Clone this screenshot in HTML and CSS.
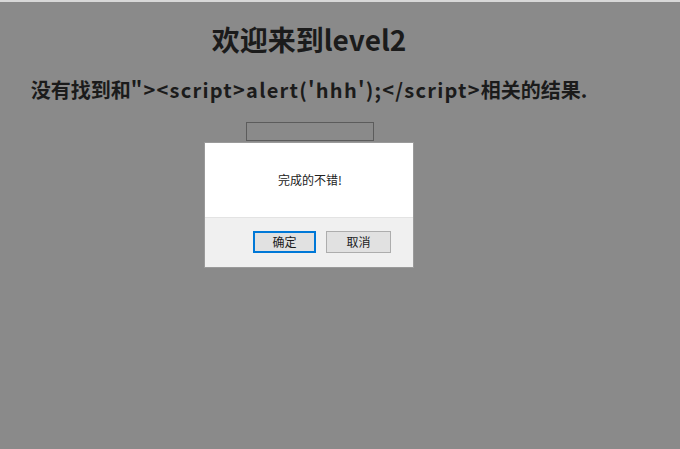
FILE: index.html
```html
<!DOCTYPE html>
<html lang="zh-CN">
<head>
<meta charset="utf-8">
<title>level2</title>
<link rel="stylesheet" href="styles.css">
</head>
<body>
<div class="topline"></div>
<main class="page">
  <h1 class="title">欢迎来到level2</h1>
  <h2 class="result">没有找到和<span class="code">"&gt;&lt;script&gt;alert('hhh');&lt;/script&gt;</span>相关的结果.</h2>
  <form class="search">
    <input class="search-input" type="text" name="keyword" value="">
  </form>
</main>
<div class="dialog" role="dialog">
  <div class="dialog-body">完成的不错!</div>
  <div class="dialog-footer">
    <button class="btn btn-primary" type="button">确定</button>
    <button class="btn" type="button">取消</button>
  </div>
</div>
</body>
</html>
```
FILE: styles.css
```css
html, body {
  margin: 0;
  padding: 0;
}
body {
  width: 680px;
  height: 449px;
  background: #8a8a8a;
  font-family: "Noto Sans CJK SC", "Noto Sans", sans-serif;
  color: #1b1b1b;
  overflow: hidden;
  position: relative;
}
.topline {
  height: 2px;
  background: #d8d8d8;
}
.page {
  width: 618px;
  text-align: center;
}
.title {
  margin: 20px 0 0;
  font-size: 28px;
  line-height: 34px;
  font-weight: 700;
}
.result {
  margin: 21px 0 0;
  font-size: 20px;
  line-height: 26px;
  font-weight: 700;
}
.code {
  letter-spacing: 1.25px;
}
.search {
  margin: 19px 0 0;
  display: flex;
  justify-content: center;
}
.search-input {
  box-sizing: border-box;
  width: 128px;
  height: 19px;
  margin: 0 0 0 1px;
  border: 1px solid #5c5c5c;
  background: #8a8a8a;
  padding: 0;
}
.dialog {
  position: absolute;
  left: 204px;
  top: 142px;
  width: 210px;
  box-sizing: border-box;
  border: 1px solid #9a9a9a;
  background: #ffffff;
}
.dialog-body {
  height: 74px;
  box-sizing: border-box;
  padding: 29px 0 0 2px;
  text-align: center;
  font-size: 12px;
  line-height: 16px;
  color: #222;
}
.dialog-footer {
  background: #f0f0f0;
  border-top: 1px solid #e3e3e3;
  height: 50px;
  box-sizing: border-box;
  padding: 13px 22px 0 0;
  display: flex;
  justify-content: flex-end;
  align-items: flex-start;
  gap: 10px;
}
.btn {
  box-sizing: border-box;
  width: 65px;
  height: 22px;
  border: 1px solid #adadad;
  background: #e1e1e1;
  font-family: "Noto Sans CJK SC", sans-serif;
  font-size: 12px;
  line-height: 18px;
  color: #1b1b1b;
  padding: 0;
  margin: 0;
}
.btn-primary {
  width: 63px;
  border: 2px solid #0078d7;
  line-height: 16px;
}
```
